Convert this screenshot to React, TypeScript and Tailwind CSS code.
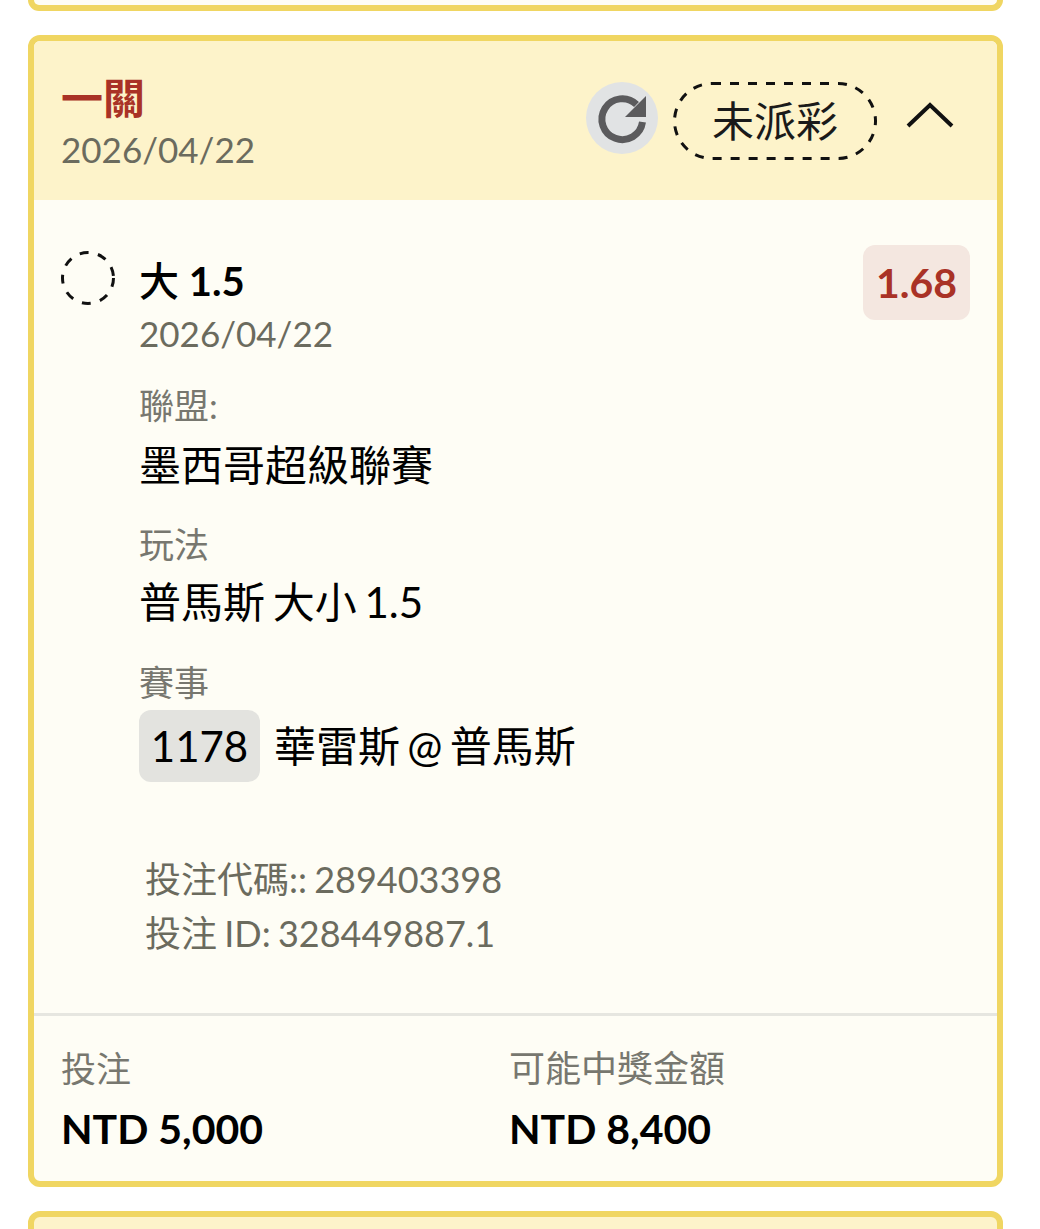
import React from 'react';

const font = { fontFamily: 'Lato, "Noto Sans CJK TC", sans-serif' };

function RefreshIcon() {
  return (
    <svg width="72" height="72" viewBox="0 0 72 72" fill="none">
      <path d="M56.5 40a20.4 20.4 0 1 1-6-17.5" stroke="#5b5b5d" strokeWidth="7" />
      <path d="M60 14v21H39z" fill="#5b5b5d" />
    </svg>
  );
}

function App() {
  return (
    <div className="w-[1040px] h-[1229px] overflow-hidden bg-white" style={font}>
      <div className="ml-7 w-[975px] h-[11px] border-b-[6px] border-x-[6px] border-[#f0d662] rounded-b-xl bg-[#fefdf5]" />
      <div className="ml-7 w-[975px] mt-[24px] border-[6px] border-[#f0d662] rounded-xl bg-[#fefdf5] overflow-hidden">
        <div className="h-[159px] bg-[#fdf3ca] flex justify-between pl-[27px]">
          <div className="pt-[31px]">
            <div className="text-[42px] leading-[52px] font-bold text-[#a93226]">一關</div>
            <div className="text-[35px] leading-[46px] mt-[2px] text-[#6b6b5e]">2026/04/22</div>
          </div>
          <div className="flex items-start pt-[41px] pr-[42px]">
            <div className="w-[72px] h-[72px] rounded-full bg-[#e1e3e4]">
              <RefreshIcon />
            </div>
            <div className="relative ml-[15px] w-[204px] h-[78px] flex items-center justify-center text-[42px] text-[#1a1a1a]">
              <svg className="absolute inset-0" width="204" height="78" fill="none">
                <rect x="1.5" y="1.5" width="201" height="75" rx="37.5" stroke="#111" strokeWidth="3" strokeDasharray="9 9" />
              </svg>
              未派彩
            </div>
            <svg className="ml-[28px] mt-[18px]" width="50" height="30" viewBox="0 0 50 30" fill="none">
              <path d="M3 26 25 5l22 21" stroke="#111" strokeWidth="4" />
            </svg>
          </div>
        </div>
        <div className="pl-[27px] pr-[27px] pt-[45px] flex items-start">
          <svg className="mt-[6px] shrink-0" width="54" height="54" fill="none">
            <circle cx="27" cy="27" r="25.5" stroke="#111" strokeWidth="3" strokeDasharray="9 9.5" />
          </svg>
          <div className="ml-[24px] flex-1">
            <div className="text-[40px] leading-[50px] font-bold text-black mt-[11px]"><span className="font-medium">大</span> 1.5</div>
            <div className="text-[35px] leading-[46px] mt-[4px] text-[#6b6b5e]">2026/04/22</div>
            <div className="text-[35px] leading-[44px] text-[#77776f] mt-[27px]">聯盟:</div>
            <div className="text-[42px] leading-[56px] text-black mt-[10px]">墨西哥超級聯賽</div>
            <div className="text-[35px] leading-[44px] text-[#77776f] mt-[29px]">玩法</div>
            <div className="text-[42px] leading-[56px] text-black mt-[8px] [word-spacing:-3px]">普馬斯 大小 1.5</div>
            <div className="text-[35px] leading-[44px] text-[#77776f] mt-[30px]">賽事</div>
            <div className="flex items-center text-[42px] text-black mt-[6px]">
              <span className="w-[121px] h-[72px] rounded-xl bg-[#e3e3df] flex items-center justify-center">1178</span>
              <span className="ml-[14px] [word-spacing:-3.5px]">華雷斯 @ 普馬斯</span>
            </div>
          </div>
          <div className="w-[107px] h-[75px] rounded-xl bg-[#f4e7e0] flex items-center justify-center text-[41px] font-bold text-[#a93226] shrink-0">1.68</div>
        </div>
        <div className="pl-[111px] pt-[70px] text-[36px] leading-[54px] text-[#6b6b5e] [word-spacing:-2px]">
          <div>投注代碼:: 289403398</div>
          <div>投注 ID: 328449887.1</div>
        </div>
        <div className="mt-[53px] border-t-[3px] border-[#e6e6e0] pl-[27px] pt-[29px] pb-[27px] grid grid-cols-[448px_1fr]">
          <div>
            <div className="text-[35px] leading-[46px] text-[#77776f]">投注</div>
            <div className="text-[41px] leading-[50px] font-bold text-black mt-[13px]">NTD 5,000</div>
          </div>
          <div>
            <div className="text-[36px] leading-[46px] text-[#77776f]">可能中獎金額</div>
            <div className="text-[41px] leading-[50px] font-bold text-black mt-[13px]">NTD 8,400</div>
          </div>
        </div>
      </div>
      <div className="ml-7 w-[975px] mt-[24px] h-[40px] border-[6px] border-[#f0d662] rounded-xl bg-[#fdf3ca]" />
    </div>
  );
}

export default App;
